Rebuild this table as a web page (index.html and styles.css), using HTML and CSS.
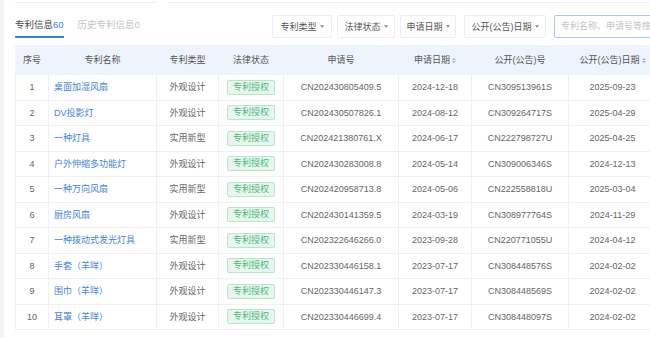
FILE: index.html
```html
<!DOCTYPE html>
<html lang="zh-CN">
<head>
<meta charset="utf-8">
<link rel="stylesheet" href="styles.css">
</head>
<body>
<div class="card">
  <div class="top-strip">
    <div class="strip-box strip-a"></div>
    <div class="strip-box strip-b"></div>
  </div>
  <div class="toolbar">
    <div class="tabs">
      <div class="tab active">专利信息<span class="num">60</span></div>
      <div class="tab muted">历史专利信息0</div>
    </div>
    <div class="filters">
      <div class="btn w60">专利类型<i class="caret"></i></div>
      <div class="btn w58">法律状态<i class="caret"></i></div>
      <div class="btn w56">申请日期<i class="caret"></i></div>
      <div class="btn w82 wide-gap">公开(公告)日期<i class="caret"></i></div>
      <div class="search wide-gap">专利名称、申请号等搜索</div>
    </div>
  </div>
  <table class="grid">
    <colgroup>
      <col class="c1"><col class="c2"><col class="c3"><col class="c4"><col class="c5"><col class="c6"><col class="c7"><col class="c8">
    </colgroup>
    <thead>
      <tr>
        <th>序号</th><th>专利名称</th><th>专利类型</th><th>法律状态</th><th>申请号</th>
        <th>申请日期<span class="sort"><i class="up"></i><i class="down"></i></span></th>
        <th>公开(公告)号</th>
        <th>公开(公告)日期<span class="sort"><i class="up"></i><i class="down"></i></span></th>
      </tr>
    </thead>
    <tbody>
      <tr><td>1</td><td class="name"><a>桌面加湿风扇</a></td><td>外观设计</td><td><span class="tag">专利授权</span></td><td>CN202430805409.5</td><td>2024-12-18</td><td>CN309513961S</td><td>2025-09-23</td></tr>
      <tr><td>2</td><td class="name"><a>DV投影灯</a></td><td>外观设计</td><td><span class="tag">专利授权</span></td><td>CN202430507826.1</td><td>2024-08-12</td><td>CN309264717S</td><td>2025-04-29</td></tr>
      <tr><td>3</td><td class="name"><a>一种灯具</a></td><td>实用新型</td><td><span class="tag">专利授权</span></td><td>CN202421380761.X</td><td>2024-06-17</td><td>CN222798727U</td><td>2025-04-25</td></tr>
      <tr><td>4</td><td class="name"><a>户外伸缩多功能灯</a></td><td>外观设计</td><td><span class="tag">专利授权</span></td><td>CN202430283008.8</td><td>2024-05-14</td><td>CN309006346S</td><td>2024-12-13</td></tr>
      <tr><td>5</td><td class="name"><a>一种万向风扇</a></td><td>实用新型</td><td><span class="tag">专利授权</span></td><td>CN202420958713.8</td><td>2024-05-06</td><td>CN222558818U</td><td>2025-03-04</td></tr>
      <tr><td>6</td><td class="name"><a>厨房风扇</a></td><td>外观设计</td><td><span class="tag">专利授权</span></td><td>CN202430141359.5</td><td>2024-03-19</td><td>CN308977764S</td><td>2024-11-29</td></tr>
      <tr><td>7</td><td class="name"><a>一种拨动式发光灯具</a></td><td>实用新型</td><td><span class="tag">专利授权</span></td><td>CN202322646266.0</td><td>2023-09-28</td><td>CN220771055U</td><td>2024-04-12</td></tr>
      <tr><td>8</td><td class="name"><a>手套（羊咩）</a></td><td>外观设计</td><td><span class="tag">专利授权</span></td><td>CN202330446158.1</td><td>2023-07-17</td><td>CN308448576S</td><td>2024-02-02</td></tr>
      <tr><td>9</td><td class="name"><a>围巾（羊咩）</a></td><td>外观设计</td><td><span class="tag">专利授权</span></td><td>CN202330446147.3</td><td>2023-07-17</td><td>CN308448569S</td><td>2024-02-02</td></tr>
      <tr><td>10</td><td class="name"><a>耳罩（羊咩）</a></td><td>外观设计</td><td><span class="tag">专利授权</span></td><td>CN202330446699.4</td><td>2023-07-17</td><td>CN308448097S</td><td>2024-02-02</td></tr>
    </tbody>
  </table>
</div>
</body>
</html>
```

FILE: styles.css
```css
html, body {
  margin: 0;
  padding: 0;
  background: #f3f4f6;
  width: 650px;
  height: 338px;
  overflow: hidden;
}
body {
  font-family: "Liberation Sans", "Noto Sans CJK SC", sans-serif;
  font-size: 9px;
  color: #666;
}
.card {
  margin-left: 4px;
  height: 338px;
  background: #fff;
  padding-left: 11px;
  overflow: hidden;
}
.top-strip {
  display: flex;
  height: 3px;
  gap: 11px;
}
.strip-box {
  border-bottom: 1px solid #eceef1;
  box-sizing: border-box;
}
.strip-a { width: 142px; }
.strip-b { flex: 1; }

.toolbar {
  display: flex;
  margin-top: 12px;
  height: 23px;
}
.tabs {
  display: flex;
  flex: 0 0 257px;
  gap: 14px;
  align-items: flex-end;
}
.tab {
  line-height: 12px;
  padding-bottom: 5px;
  border-bottom: 2px solid transparent;
  font-size: 9.5px;
}
.tab.active {
  color: #444;
  border-bottom-color: #3a7fd2;
}
.tab .num { color: #3a7fd2; }
.tab.muted { color: #c4c4c4; }

.filters {
  display: flex;
  gap: 5px;
}
.btn {
  display: flex;
  align-items: center;
  justify-content: center;
  gap: 3px;
  height: 23px;
  box-sizing: border-box;
  padding: 0;
  border: 1px solid #eceef1;
  border-radius: 2px;
  color: #555;
  line-height: 12px;
  white-space: nowrap;
}
.w60 { width: 60px; }
.w58 { width: 58px; }
.w56 { width: 56px; }
.w82 { width: 82px; }
.caret {
  width: 0;
  height: 0;
  border-left: 2.5px solid transparent;
  border-right: 2.5px solid transparent;
  border-top: 3px solid #999;
}
.wide-gap { margin-left: 3px; }
.search {
  width: 130px;
  height: 23px;
  box-sizing: border-box;
  border: 1px solid #a9c9ef;
  border-radius: 2px;
  padding: 0 6px;
  line-height: 21px;
  color: #c4c4c4;
  white-space: nowrap;
  overflow: hidden;
}

.grid {
  margin-top: 7px;
  border-collapse: collapse;
  table-layout: fixed;
  width: 641px;
}
.c1 { width: 33px; }
.c2 { width: 108px; }
.c3 { width: 62px; }
.c4 { width: 65px; }
.c5 { width: 115px; }
.c6 { width: 73px; }
.c7 { width: 97px; }
.c8 { width: 88px; }

.grid th {
  height: 28px;
  padding: 0;
  background: #eef4fb;
  color: #555;
  font-weight: normal;
  text-align: center;
  border: 1px solid #eef4fb;
  line-height: 12px;
  white-space: nowrap;
}
.grid td {
  height: 24.5px;
  padding: 0;
  text-align: center;
  border: 1px solid #eef0f3;
  line-height: 12px;
  white-space: nowrap;
  color: #666;
}
.grid td.name {
  text-align: left;
  padding-left: 5px;
}
.name a {
  color: #4485d6;
}
.tag {
  display: inline-block;
  padding: 0 5px;
  height: 15px;
  line-height: 13px;
  box-sizing: border-box;
  background: #e7f7ed;
  border: 1px solid #b8e6c8;
  color: #4cb97c;
  border-radius: 2px;
}
.sort {
  display: inline-flex;
  flex-direction: column;
  gap: 1px;
  margin-left: 2px;
  vertical-align: middle;
}
.sort i {
  width: 0;
  height: 0;
  border-left: 2px solid transparent;
  border-right: 2px solid transparent;
}
.sort .up { border-bottom: 2px solid #b0b0b0; }
.sort .down { border-top: 2px solid #b0b0b0; }
```
